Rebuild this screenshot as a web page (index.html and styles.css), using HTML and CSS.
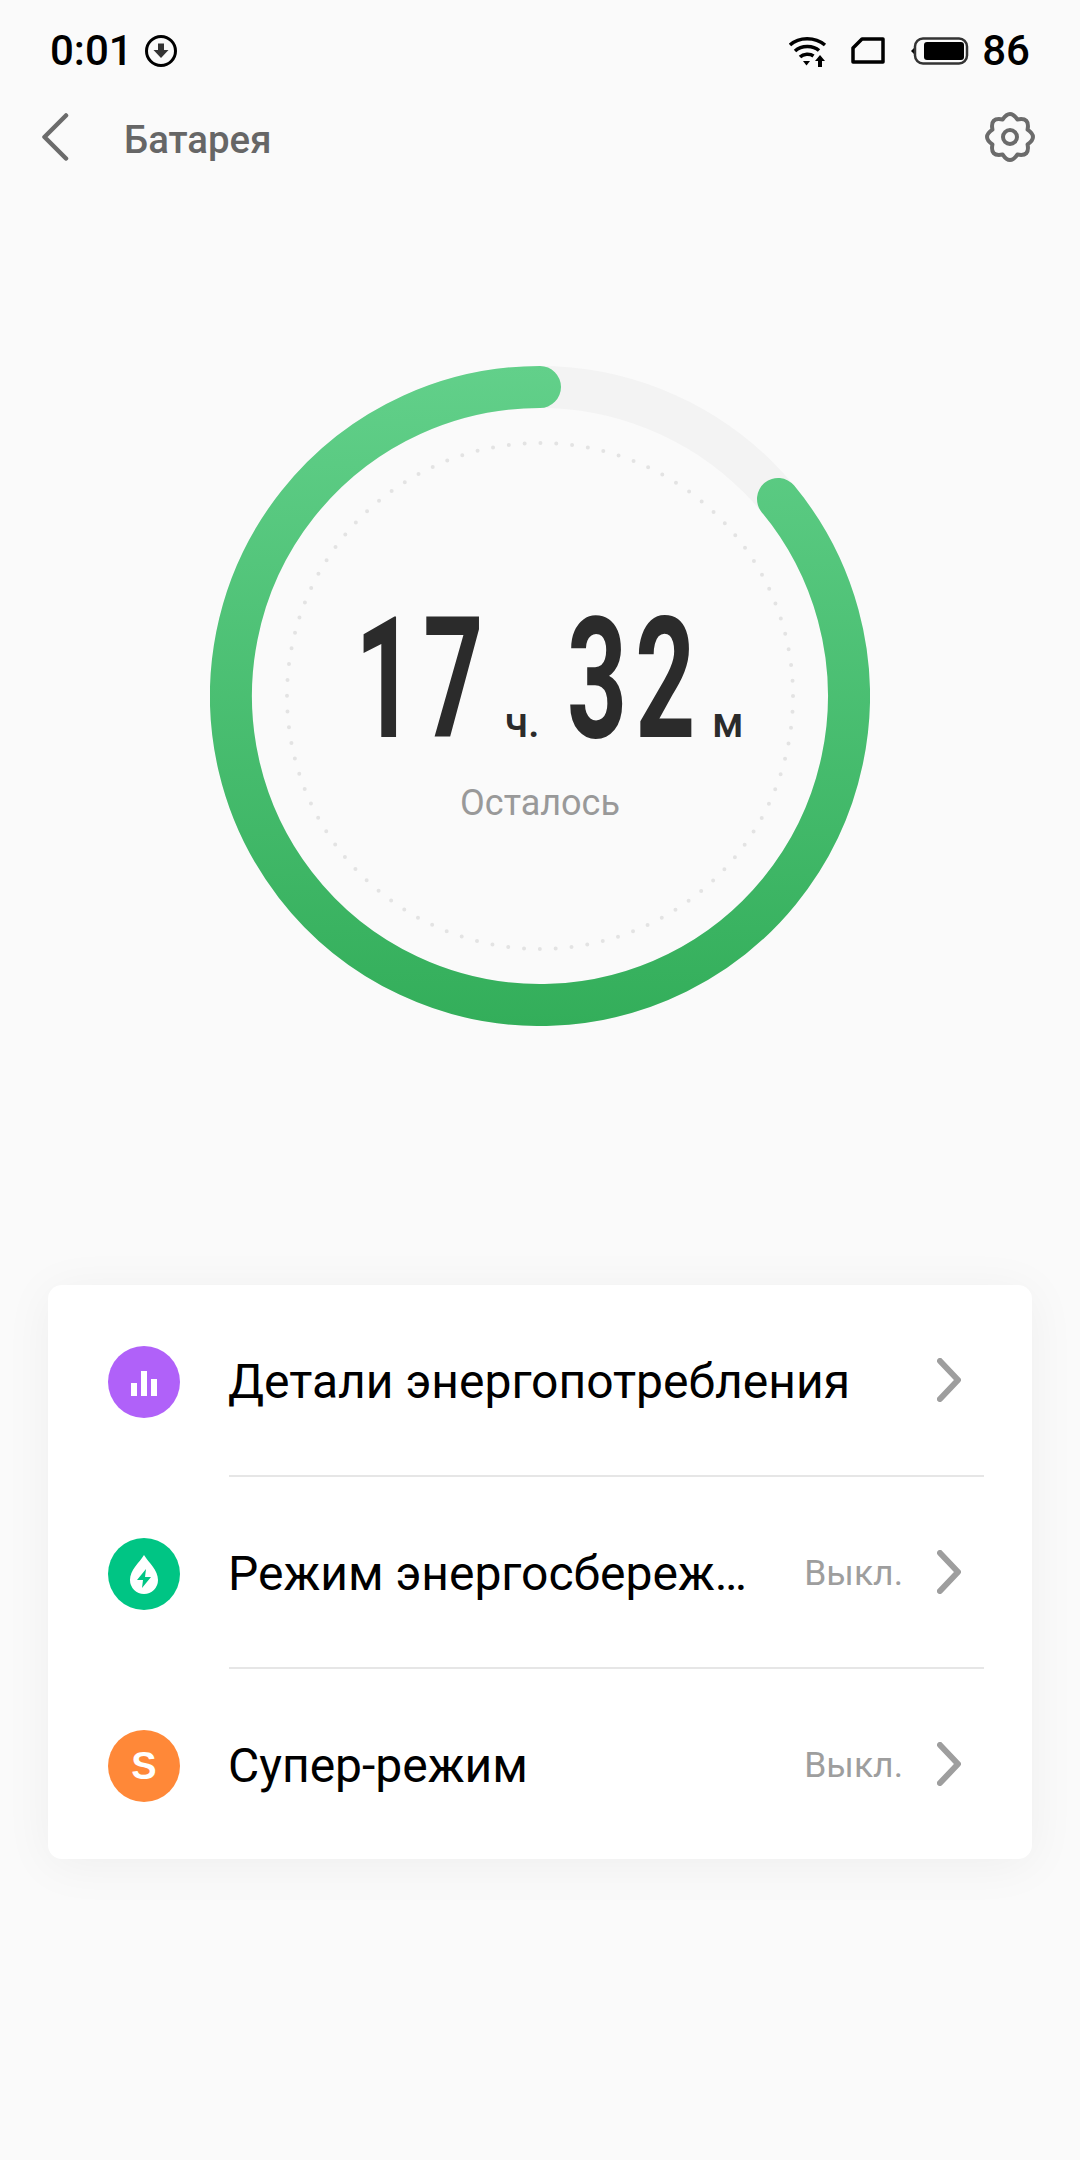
FILE: index.html
```html
<!DOCTYPE html>
<html lang="ru">
<head>
    <meta charset="UTF-8">
    <meta name="viewport" content="width=device-width, initial-scale=1.0">
    <link rel="stylesheet" href="styles.css">
</head>
<body>
    <div class="status-bar">
        <div class="status-left">
            <span class="status-time">0:01</span>
            <svg class="icon-download" width="34" height="34" viewBox="0 0 34 34">
                <circle cx="17" cy="17" r="14.5" fill="none" stroke="#000" stroke-width="3"/>
                <path d="M14 9.500h6V16h4.500L17 24l-7.500-8H14z" fill="#333"/>
            </svg>
        </div>
        <div class="status-right">
            <svg class="icon-wifi" width="38" height="32" viewBox="0 0 38 32">
                <g fill="none" stroke="#000" stroke-width="3.500">
                    <path d="M1 10C10 1.500 26 1.500 36 10"/>
                    <path d="M6 16C12.500 10 24 10 30 15.500"/>
                    <path d="M11 22C14.500 18.500 21 18.500 24.500 21"/>
                </g>
                <path d="M14 26h7l-3.500 4.500z" fill="#000"/>
                <path d="M31 20l5 6h-3v6h-4v-6h-3z" fill="#000"/>
            </svg>
            <svg class="icon-sim" width="34" height="27" viewBox="0 0 34 27">
                <path d="M11 2h21v23H2V11z" fill="none" stroke="#000" stroke-width="3.500" stroke-linejoin="round"/>
            </svg>
            <svg class="icon-battery" width="58" height="28" viewBox="0 0 58 28">
                <path d="M0 14l4-4v8z" fill="#000"/>
                <rect x="4" y="1.500" width="52" height="25" rx="8" fill="none" stroke="#333" stroke-width="2.500"/>
                <rect x="13" y="5" width="40" height="18" rx="3" fill="#000"/>
            </svg>
            <span class="status-level">86</span>
        </div>
    </div>

    <div class="title-bar">
        <svg class="icon-back" width="28" height="48" viewBox="0 0 28 48">
            <path d="M25 2.500L3.500 24 25 45.500" fill="none" stroke="#6b6b6b" stroke-width="4.500" stroke-linecap="round" stroke-linejoin="round"/>
        </svg>
        <span class="title-text">Батарея</span>
        <svg class="icon-gear" width="50" height="50" viewBox="0 0 50 50">
            <path d="M17.700 7.450Q25 -3.400 32.300 7.450Q45.100 4.900 42.550 17.700Q53.400 25 42.550 32.300Q45.100 45.100 32.300 42.550Q25 53.400 17.700 42.550Q4.900 45.100 7.450 32.300Q-3.400 25 7.450 17.700Q4.900 4.900 17.700 7.450z" fill="none" stroke="#6b6b6b" stroke-width="4" stroke-linejoin="round"/>
            <circle cx="25" cy="25" r="7" fill="none" stroke="#6b6b6b" stroke-width="4"/>
        </svg>
    </div>

    <div class="gauge">
        <svg class="gauge-ring" width="660" height="660" viewBox="0 0 660 660">
            <defs>
                <linearGradient id="ringFill" gradientUnits="userSpaceOnUse" x1="0" y1="0" x2="0" y2="660">
                    <stop offset="0" stop-color="#62d08a"/>
                    <stop offset="1" stop-color="#33ae5a"/>
                </linearGradient>
            </defs>
            <circle cx="330" cy="330" r="309" fill="none" stroke="#f3f3f3" stroke-width="42"/>
            <circle cx="330" cy="330" r="253" fill="none" stroke="#e3e3e3" stroke-width="4" stroke-linecap="round" stroke-dasharray="0 15.896"/>
            <path d="M568 133A309 309 0 1 1 330 21" fill="none" stroke="url(#ringFill)" stroke-width="42" stroke-linecap="round"/>
        </svg>
        <div class="gauge-text">
            <div class="time-row">
                <span class="time-num">17</span>
                <span class="time-unit unit-hours">ч.</span>
                <span class="time-num">32</span>
                <span class="time-unit unit-minutes">м</span>
            </div>
            <div class="time-label">Осталось</div>
        </div>
    </div>

    <div class="menu-card">
        <div class="menu-row">
            <span class="menu-icon icon-purple">
                <svg width="28" height="28" viewBox="0 0 28 28">
                    <path d="M1 15h6v13H1zM11 3h6v25h-6zM21 11h6v17h-6z" fill="#fff"/>
                </svg>
            </span>
            <span class="menu-text">Детали энергопотребления</span>
            <svg class="chevron" width="24" height="44" viewBox="0 0 24 44">
                <path d="M3 3l18 19L3 41" fill="none" stroke="#9e9e9e" stroke-width="6" stroke-linecap="round" stroke-linejoin="round"/>
            </svg>
        </div>
        <div class="menu-line"></div>
        <div class="menu-row">
            <span class="menu-icon icon-green">
                <svg width="30" height="40" viewBox="0 0 30 40">
                    <path d="M15 1C10 9 1 16 1 26a14 14 0 0 0 28 0C29 16 20 9 15 1z" fill="#fff"/>
                    <path d="M17 15L8 26h6l-1 8 9-11h-6z" fill="#00c584"/>
                </svg>
            </span>
            <span class="menu-text">Режим энергосбереж…</span>
            <span class="menu-value">Выкл.</span>
            <svg class="chevron" width="24" height="44" viewBox="0 0 24 44">
                <path d="M3 3l18 19L3 41" fill="none" stroke="#9e9e9e" stroke-width="6" stroke-linecap="round" stroke-linejoin="round"/>
            </svg>
        </div>
        <div class="menu-line"></div>
        <div class="menu-row">
            <span class="menu-icon icon-orange">S</span>
            <span class="menu-text">Супер-режим</span>
            <span class="menu-value">Выкл.</span>
            <svg class="chevron" width="24" height="44" viewBox="0 0 24 44">
                <path d="M3 3l18 19L3 41" fill="none" stroke="#9e9e9e" stroke-width="6" stroke-linecap="round" stroke-linejoin="round"/>
            </svg>
        </div>
    </div>
</body>
</html>
```

FILE: styles.css
```css
* { box-sizing: border-box; }
html, body { margin: 0; padding: 0; }
body {
    width: 1080px;
    height: 2160px;
    overflow: hidden;
    background-color: #fafafa;
    font-family: Roboto, "Noto Sans", sans-serif;
}

/* status bar */
.status-bar {
    height: 72px;
    padding: 29px 50px 0 50px;
    display: flex;
    justify-content: space-between;
    align-items: center;
    color: #000;
}
.status-left, .status-right { display: flex; align-items: center; }
.status-time, .status-level { font-size: 42px; font-weight: 500; line-height: 44px; }
.icon-download { margin-left: 11px; }
.icon-sim { margin-left: 24px; }
.icon-battery { margin-left: 26px; }
.status-level { margin-left: 13px; }

/* title bar */
.title-bar {
    height: 130px;
    padding: 0 45px 0 41px;
    display: flex;
    align-items: center;
}
.title-text {
    margin-left: 55px;
    padding-top: 4px;
    flex: 1;
    font-size: 38.400px;
    font-weight: 500;
    color: #666;
}

/* gauge */
.gauge {
    position: relative;
    width: 660px;
    height: 660px;
    margin: 164px auto 0;
}
.gauge-ring { display: block; }
.gauge-text {
    position: absolute;
    inset: 0;
    display: flex;
    flex-direction: column;
    align-items: center;
}
.time-row {
    margin-top: 238px;
    margin-left: 60px;
    height: 150px;
    width: 430px;
    display: flex;
    align-items: baseline;
    color: #2b2b2b;
    white-space: nowrap;
}
.time-num {
    display: inline-block;
    width: 128px;
    font-size: 169px;
    line-height: 150px;
    font-weight: 700;
    letter-spacing: 13px;
    transform: scaleX(.62);
    transform-origin: left;
}
.time-unit { font-size: 42px; font-weight: 500; }
.unit-hours { width: 62px; margin-left: 22px; }
.unit-minutes { margin-left: 17px; }
.time-label {
    margin-top: 28px;
    font-size: 36px;
    color: #999;
}

/* menu card */
.menu-card {
    width: 984px;
    height: 574px;
    margin: 259px auto 0;
    padding-top: 4px;
    background-color: #fff;
    border-radius: 14px;
    box-shadow: 0 6px 50px rgba(0, 0, 0, .05);
}
.menu-row {
    height: 186px;
    padding: 0 71px 0 60px;
    display: flex;
    align-items: center;
}
.menu-line {
    height: 2px;
    margin: 0 48px 4px 181px;
    background-color: #e6e6e6;
}
.menu-icon {
    width: 72px;
    height: 72px;
    flex: none;
    border-radius: 50%;
    display: flex;
    align-items: center;
    justify-content: center;
    color: #fff;
    font-family: "Liberation Sans", sans-serif;
    font-size: 38px;
    font-weight: 700;
}
.icon-purple { background-color: #b061f9; }
.icon-green { background-color: #00c584; }
.icon-orange { background-color: #ff8838; }
.menu-text {
    flex: 1;
    margin-left: 48px;
    margin-bottom: 2px;
    font-size: 48px;
    color: #000;
    white-space: nowrap;
}
.menu-value {
    margin-right: 34px;
    margin-bottom: 2px;
    font-size: 35.500px;
    color: #9e9e9e;
}
.chevron { flex: none; margin-bottom: 4px; }
```
